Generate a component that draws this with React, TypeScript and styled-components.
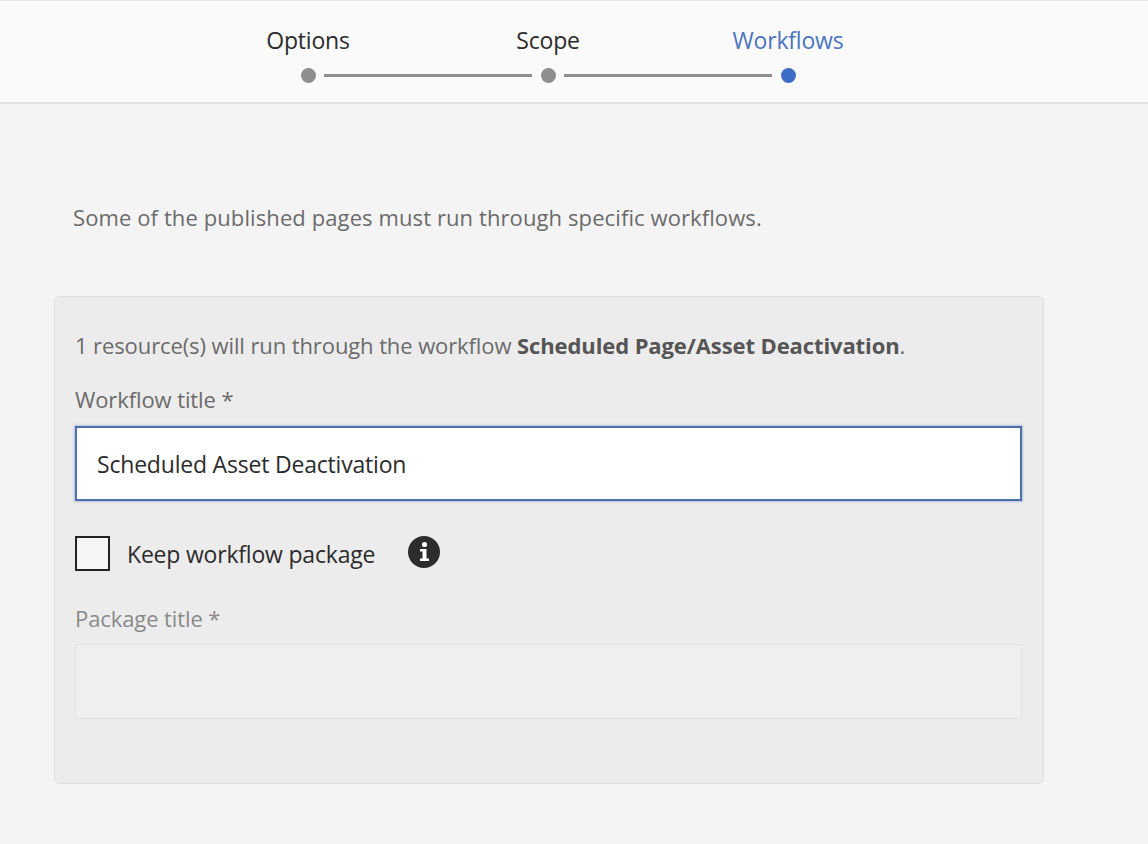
import * as React from 'react'
import styled, { createGlobalStyle } from 'styled-components'

const Global = createGlobalStyle`
	body {
		margin: 0;
		background: #f4f4f4;
		font-family: 'Open Sans', 'Liberation Sans', sans-serif;
	}
`

const Header = styled.div`
	height: 104px;
	background: #fafafa;
	border-top: 1px solid #e4e4e4;
	border-bottom: 2px solid #e2e2e2;
	box-sizing: border-box;
	display: flex;
	justify-content: center;
`

const Steps = styled.div`
	display: grid;
	grid-template-columns: 240px 240px 240px;
	margin-right: 52px;
`

const Step = styled.div`
	position: relative;
	display: flex;
	flex-direction: column;
	align-items: center;
	padding-top: 24px;
`

const StepLabel = styled.div<{ $active?: boolean }>`
	font-size: 23px;
	line-height: 31px;
	letter-spacing: -0.2px;
	color: ${p => (p.$active ? '#4a74c0' : '#2c2c2c')};
	height: 31px;
`

const Dot = styled.div<{ $active?: boolean }>`
	width: 15px;
	height: 15px;
	border-radius: 50%;
	margin-top: 12px;
	background: ${p => (p.$active ? '#3c6cc4' : '#8e8e8e')};
`

const Line = styled.div`
	position: absolute;
	top: 73px;
	left: calc(50% + 16px);
	width: 208px;
	height: 3px;
	background: #8e8e8e;
`

const Main = styled.div`
	padding: 98px 0 0 54px;
	width: 990px;
`

const Intro = styled.p`
	margin: 0 0 64px 19px;
	font-size: 22px;
	line-height: 30px;
	letter-spacing: 0.1px;
	color: #6b6b6b;
`

const Panel = styled.div`
	background: #ececec;
	border: 1px solid #dedede;
	border-radius: 6px;
	padding: 34px 21px 0 20px;
	height: 488px;
	box-sizing: border-box;
`

const Resource = styled.div`
	font-size: 22px;
	line-height: 28px;
	letter-spacing: -0.1px;
	color: #6b6b6b;
	b {
		color: #555;
		font-weight: 700;
	}
`

const Label = styled.div<{ $muted?: boolean }>`
	font-size: 22px;
	line-height: 28px;
	letter-spacing: -0.1px;
	color: ${p => (p.$muted ? '#8a8a8a' : '#6b6b6b')};
	margin: ${p => (p.$muted ? '33px 0 12px' : '26px 0 13px')};
`

const Input = styled.div<{ $disabled?: boolean }>`
	height: 75px;
	box-sizing: border-box;
	display: flex;
	align-items: center;
	padding-left: 20px;
	font-size: 23px;
	letter-spacing: -0.2px;
	color: #2c2c2c;
	background: ${p => (p.$disabled ? '#efefef' : '#fff')};
	border: ${p => (p.$disabled ? '1px solid #e2e2e2' : '2px solid #4e6fae')};
	box-shadow: ${p => (p.$disabled ? 'none' : '0 0 2px 1px rgba(75,110,180,0.35)')};
`

const CheckRow = styled.div`
	display: flex;
	align-items: center;
	height: 35px;
	margin-top: 35px;
	font-size: 23px;
	letter-spacing: -0.2px;
	color: #2c2c2c;
`

const Box = styled.div`
	width: 35px;
	height: 35px;
	box-sizing: border-box;
	border: 2px solid #222;
	background: #f6f6f6;
	margin-right: 17px;
`

const Info = styled.svg`
	margin-left: 33px;
	margin-top: -4px;
`

export default function App() {
	const steps = ['Options', 'Scope', 'Workflows']
	return (
		<>
			<Global />
			<Header>
				<Steps>
					{steps.map((s, i) => (
						<Step key={s}>
							<StepLabel $active={i === 2}>{s}</StepLabel>
							<Dot $active={i === 2} />
							{i < 2 && <Line />}
						</Step>
					))}
				</Steps>
			</Header>
			<Main>
				<Intro>Some of the published pages must run through specific workflows.</Intro>
				<Panel>
					<Resource>
						1 resource(s) will run through the workflow <b>Scheduled Page/Asset Deactivation</b>.
					</Resource>
					<Label>Workflow title *</Label>
					<Input>Scheduled Asset Deactivation</Input>
					<CheckRow>
						<Box />
						Keep workflow package
						<Info width="32" height="32" viewBox="0 0 32 32">
							<circle cx="16" cy="16" r="16" fill="#2c2c2c" />
							<circle cx="16.5" cy="8.5" r="2.6" fill="#fff" />
							<path d="M12 13h6.5v9.5H21V25h-9v-2.5h2.5V15.5H12z" fill="#fff" />
						</Info>
					</CheckRow>
					<Label $muted>Package title *</Label>
					<Input $disabled />
				</Panel>
			</Main>
		</>
	)
}
